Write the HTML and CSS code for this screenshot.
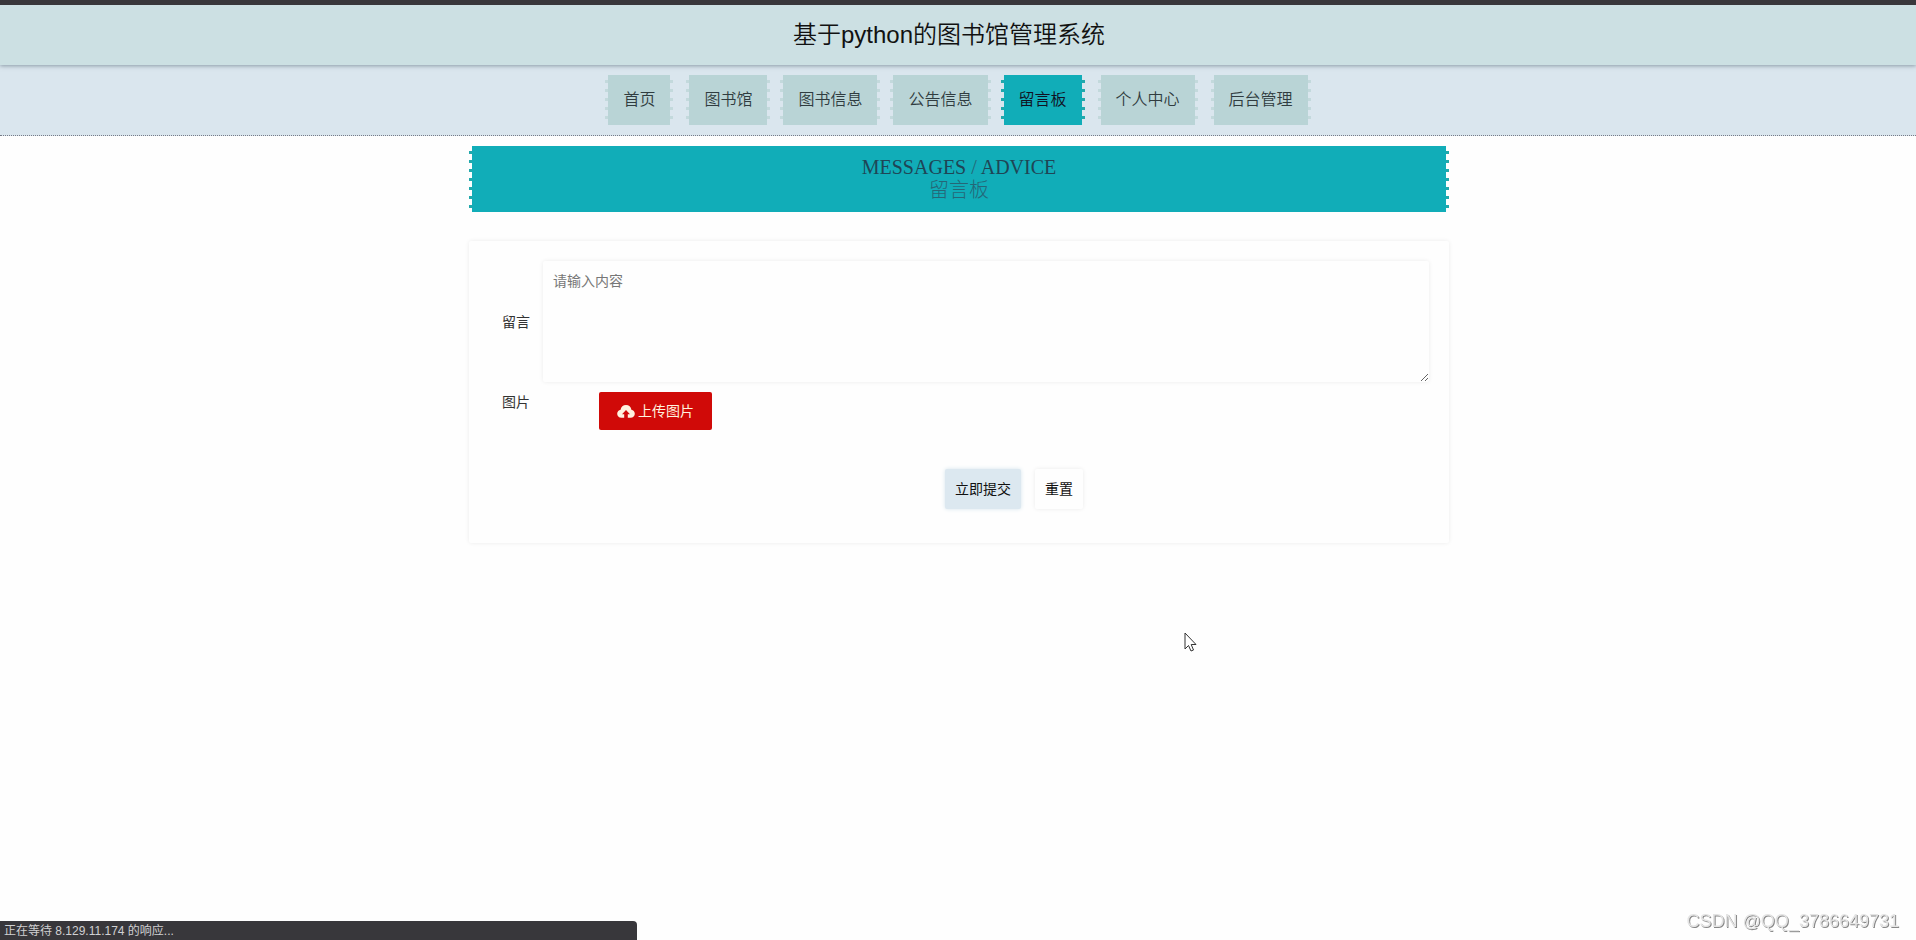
FILE: index.html
```html
<!DOCTYPE html>
<html lang="zh-CN">
<head>
<meta charset="utf-8">
<title>基于python的图书馆管理系统</title>
<link rel="stylesheet" href="styles.css">
</head>
<body>
<header class="site-header"><h1 class="site-title">基于python的图书馆管理系统</h1></header>
<nav class="site-nav">
  <div class="nav-group"><a class="nav-link stamp" href="#">首页</a></div>
  <div class="nav-group">
    <a class="nav-link stamp" href="#">图书馆</a>
    <a class="nav-link stamp" href="#">图书信息</a>
    <a class="nav-link stamp" href="#">公告信息</a>
    <a class="nav-link stamp active" href="#" aria-current="page">留言板</a>
  </div>
  <div class="nav-group"><a class="nav-link stamp" href="#">个人中心</a></div>
  <div class="nav-group"><a class="nav-link stamp" href="#">后台管理</a></div>
</nav>
<main class="content">
  <h2 class="banner stamp active"><span>MESSAGES <span class="slash">/</span> ADVICE</span><span class="banner-sub">留言板</span></h2>
  <form class="card">
    <div class="row message-row">
      <label class="label" for="message">留言</label>
      <textarea class="message" id="message" placeholder="请输入内容"></textarea>
    </div>
    <div class="row upload-row">
      <label class="label" for="upload">图片</label>
      <button class="upload" id="upload" type="button">
        <svg class="upload-icon" viewBox="0 0 20 16" aria-hidden="true"><path fill="currentColor" d="M5 15C2 15 .2 13 .2 10.500C.2 8 2 6.400 4 6C4.400 3 6.800 .8 10 .8C13.200 .8 15.600 3 16 6C18 6.400 19.800 8 19.800 10.500C19.800 13 18 15 15 15H12V11H14.400L10 6.300L5.600 11H8V15Z"/></svg><span>上传图片</span>
      </button>
    </div>
    <div class="actions">
      <button class="action submit" type="submit">立即提交</button>
      <button class="action reset" type="reset">重置</button>
    </div>
  </form>
</main>
<svg class="cursor" viewBox="0 0 13 21" aria-hidden="true"><path d="M1 1V17L4.500 13.500L7 19L9.500 18L7.200 12.500H12Z" fill="#fff" stroke="#333"/></svg>
<div class="status">正在等待 8.129.11.174 的响应...</div>
<div class="watermark">CSDN @QQ_3786649731</div>
</body>
</html>
```
FILE: styles.css
```css
* {
  box-sizing: border-box;
}

body {
  margin: 0;
  min-height: 100vh;
  background: #fefefe;
  color: #333;
  font: 14px/20px "Liberation Sans", "Noto Sans CJK SC", sans-serif;
}

button,
textarea {
  font: inherit;
}

.site-header {
  position: relative;
  padding: 12px 18px 12px 0;
  border-top: 5px solid #38373b;
  background: #cce0e3;
  box-shadow: 0 1px 4px rgba(60, 80, 95, 0.5);
}

.site-title {
  margin: 0;
  color: #111;
  font-size: 24px;
  font-weight: 350;
  line-height: 36px;
  text-align: center;
}

.site-nav {
  display: flex;
  justify-content: center;
  gap: 13px;
  padding: 10px 0;
  border-bottom: 1px dotted #777c88;
  background: #dae6ee;
}

.nav-group {
  display: flex;
  gap: 10px;
}

.stamp {
  --fill: #b9d4d6;
  --dot: #c3d9dc;
  background:
    linear-gradient(var(--fill), var(--fill)) center / calc(100% - 6px) 100% no-repeat,
    repeating-linear-gradient(transparent 0 5px, var(--dot) 5px 8px, transparent 8px 9px);
}

.stamp.active {
  --fill: #11adb8;
  --dot: #22a9ac;
}

.nav-link {
  padding: 13px 18px;
  color: #303c40;
  font-size: 16px;
  font-weight: 350;
  line-height: 24px;
  text-decoration: none;
}

.nav-link.active {
  color: #112;
}

.content {
  width: 982px;
  max-width: 100%;
  margin: 0 auto;
  padding: 10px 0 0 2px;
}

.banner {
  display: flex;
  flex-direction: column;
  align-items: center;
  margin: 0 0 29px;
  padding: 10px;
  color: #1f4555;
  font: 300 20px/23px "Liberation Serif", "Noto Sans CJK SC", serif;
}

.slash,
.banner-sub {
  color: #256777;
}

.card {
  padding: 20px;
  border-radius: 2px;
  background: #fefefe;
  box-shadow: 0 0 4px rgba(0, 0, 0, 0.08);
}

.row {
  display: flex;
}

.label {
  flex: none;
  width: 54px;
  padding-left: 13px;
}

.message-row {
  align-items: center;
}

.message {
  flex: 1;
  min-width: 0;
  height: 121px;
  padding: 10px;
  border: 0;
  border-radius: 2px;
  background: #fefefe;
  box-shadow: 0 0 4px rgba(0, 0, 0, 0.08);
  resize: vertical;
}

.message::placeholder {
  color: #777;
}

.upload-row {
  align-items: flex-start;
  gap: 56px;
  padding-top: 10px;
}

.upload {
  display: flex;
  align-items: center;
  gap: 3px;
  padding: 9px 18px;
  border: 0;
  border-radius: 2px;
  background: #d00a08;
  color: #fff2df;
}

.upload-icon {
  width: 18px;
  height: 15px;
}

.actions {
  display: flex;
  justify-content: center;
  gap: 14px;
  padding: 39px 0 14px 110px;
}

.action {
  padding: 10px;
  border: 0;
  border-radius: 2px;
  color: #111;
}

.submit {
  background: #dce8f0;
  box-shadow: 0 0 4px #d5e5ed;
}

.reset {
  background: #fefefe;
  box-shadow: 0 0 4px rgba(0, 0, 0, 0.08);
}

.cursor {
  position: absolute;
  top: 632px;
  left: 1184px;
  width: 13px;
  height: 21px;
}

.status {
  position: fixed;
  bottom: 0;
  left: 0;
  width: 637px;
  padding: 1px 0 0 4px;
  border-radius: 0 4px 0 0;
  background: #38373b;
  color: #d0d0d2;
  font-size: 12px;
  line-height: 18px;
}

.watermark {
  position: fixed;
  right: 17px;
  bottom: 9px;
  color: #e4e4e4;
  font-size: 18px;
  text-shadow: 1px 1px 0 #888;
}
```
